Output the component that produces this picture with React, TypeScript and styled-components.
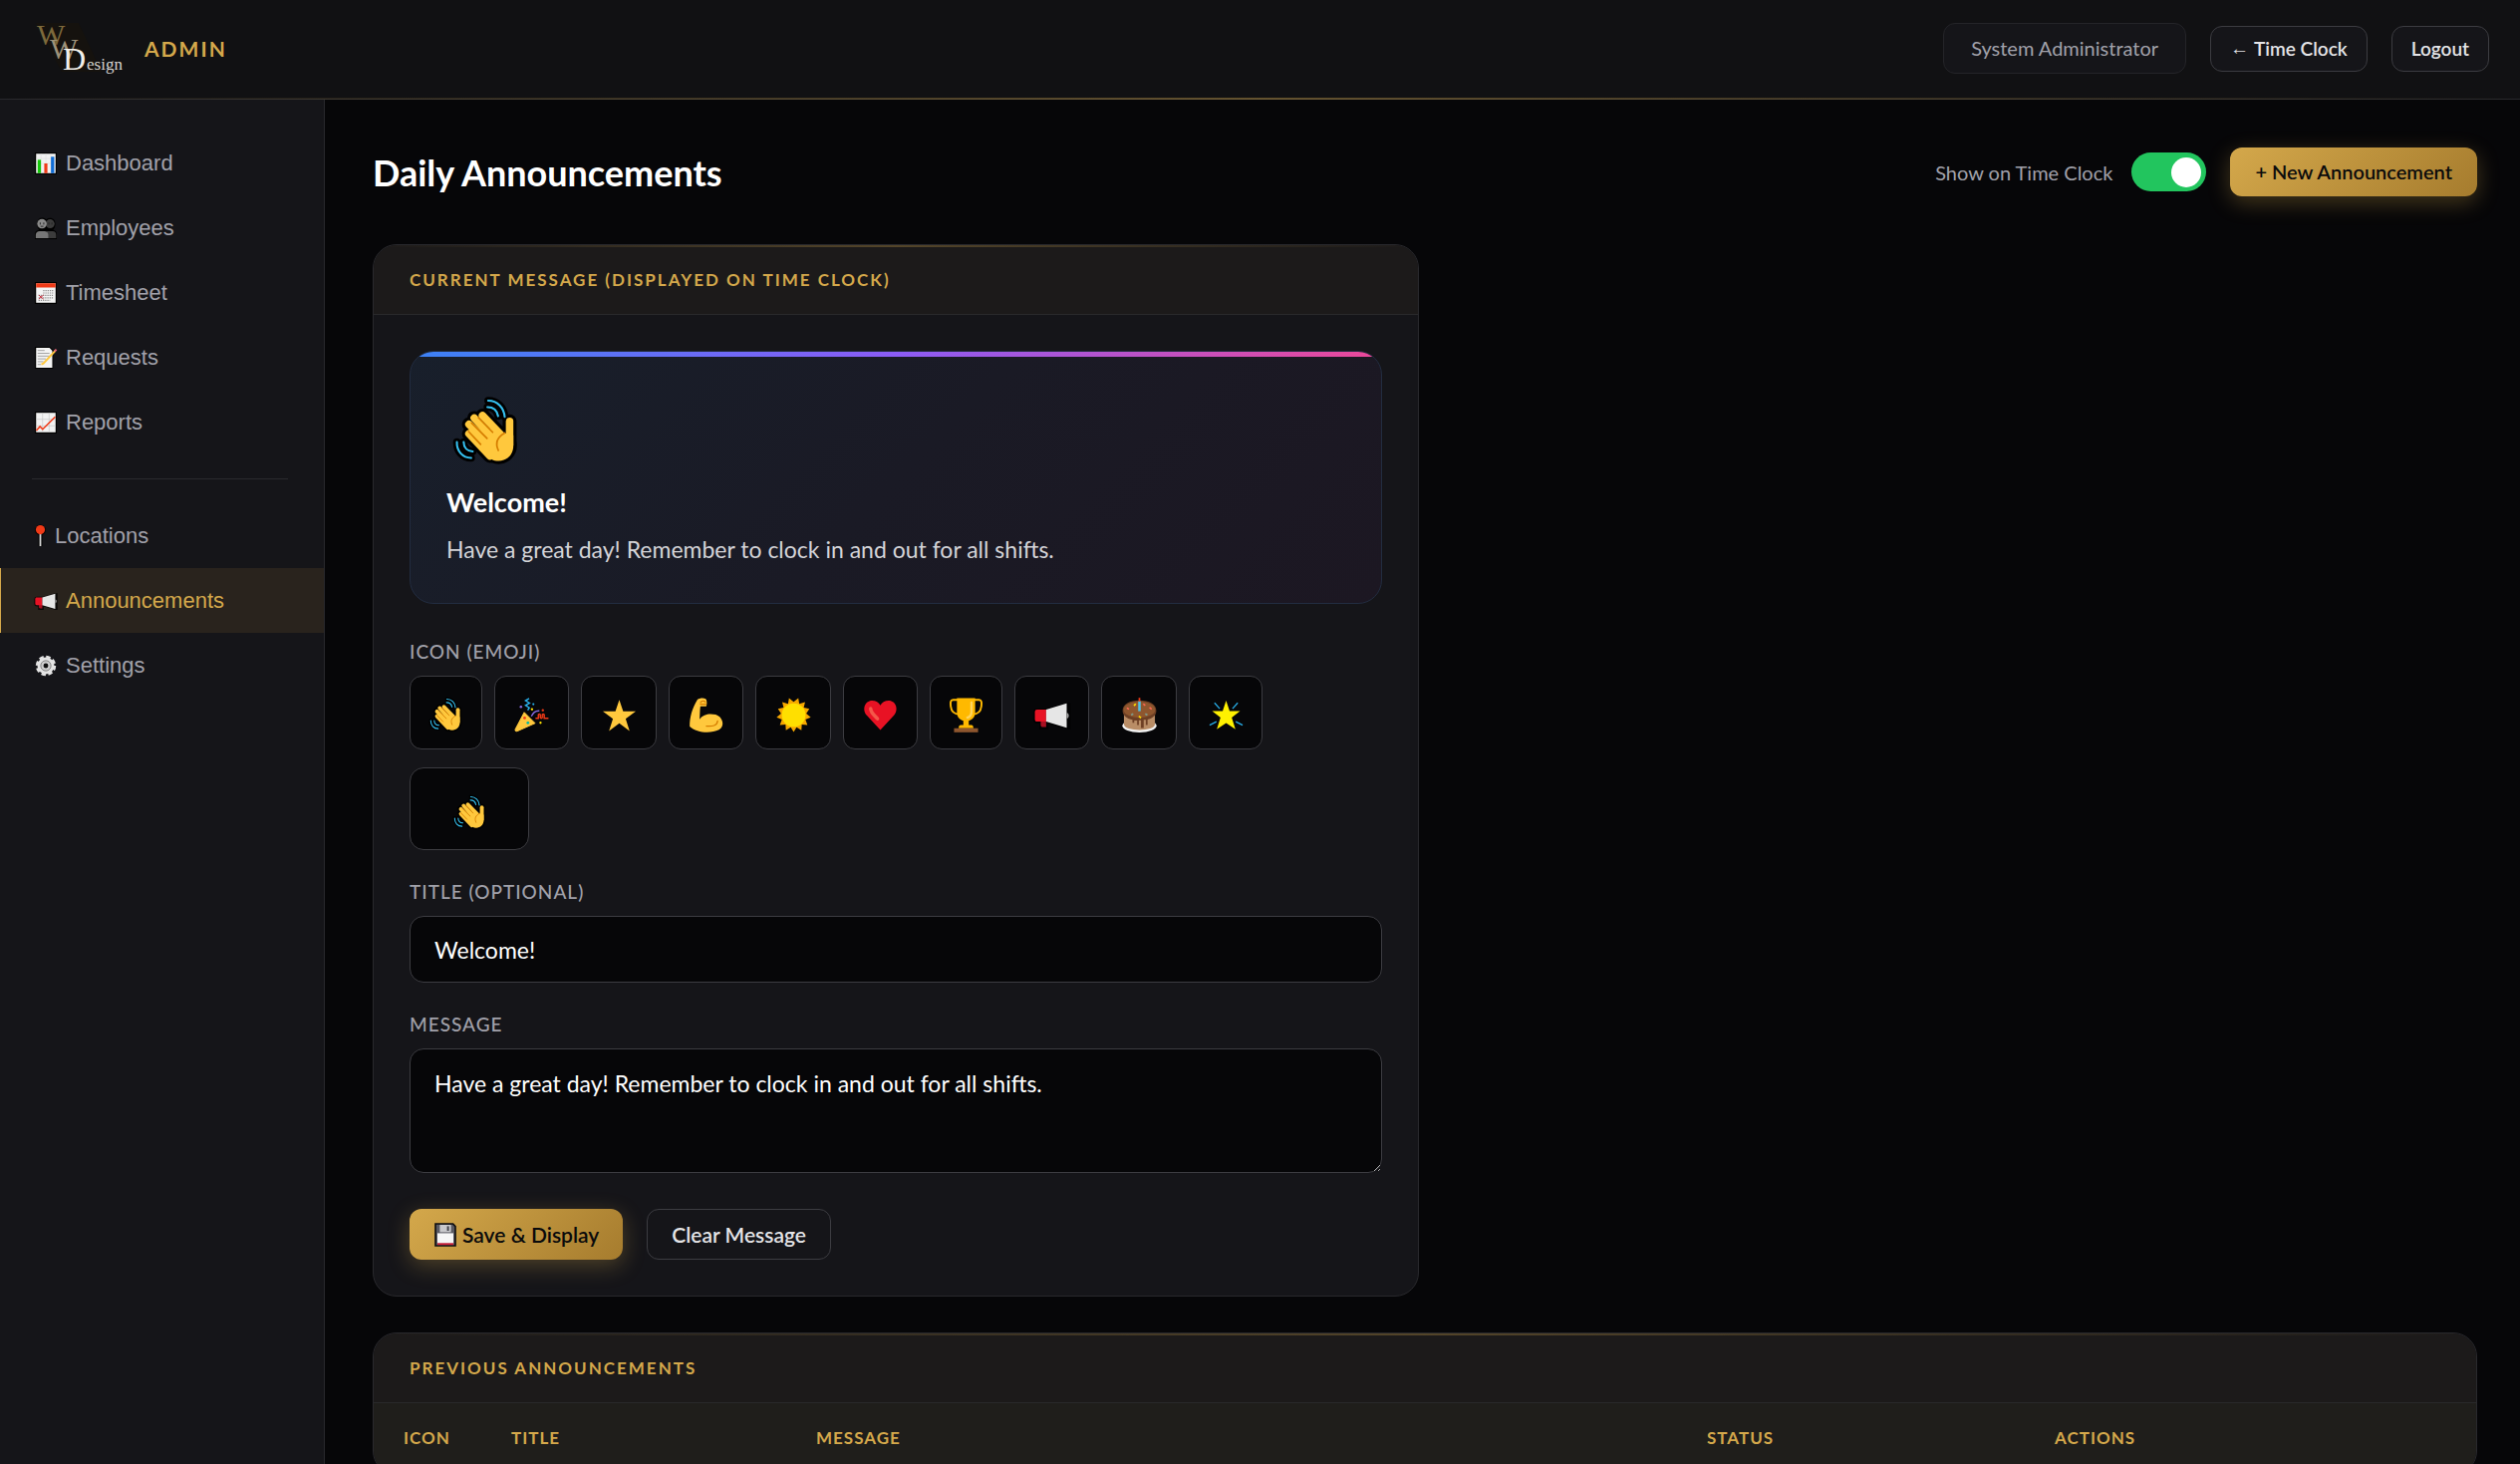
import React, { useState } from "react";
import styled, { createGlobalStyle, css } from "styled-components";

const sans = `Lato, "Noto Sans", sans-serif`;

const GlobalStyle = createGlobalStyle`
  *, *::before, *::after { box-sizing: border-box; }
  body {
    margin: 0;
    background: #060608;
    color: #ffffff;
    font-family: ${sans};
  }
  button, input, textarea { font-family: inherit; }
`;

/* ---------- page frame ---------- */

const Page = styled.div`
  display: flex;
  flex-direction: column;
  height: 100vh;
`;

const TopBar = styled.header`
  position: relative;
  display: flex;
  align-items: center;
  justify-content: space-between;
  flex: none;
  height: 100px;
  padding: 0 31px 2px 36px;
  background: #111113;
  border-bottom: 1px solid #29292d;
  &::after {
    content: "";
    position: absolute;
    left: 0;
    right: 0;
    bottom: -1px;
    height: 2px;
    background: linear-gradient(90deg, transparent, #d4a84b, transparent);
    opacity: 0.4;
  }
`;

const Brand = styled.div`
  display: flex;
  align-items: center;
  gap: 21px;
`;

const BrandName = styled.span`
  font-size: 21px;
  font-weight: 700;
  letter-spacing: 2px;
  color: #d4a84b;
`;

const TopActions = styled.div`
  display: flex;
  align-items: center;
  gap: 24px;
`;

const UserBadge = styled.span`
  padding: 12px 27px;
  border: 1px solid #242428;
  border-radius: 12px;
  background: #151519;
  color: #a1a1aa;
  font-size: 20px;
  line-height: 25px;
`;

const Body = styled.div`
  display: flex;
  flex: 1;
  min-height: 0;
`;

const Sidebar = styled.nav`
  flex: none;
  width: 326px;
  padding: 31px 0;
  background: #151519;
  border-right: 1px solid #29292d;
`;

const NavLink = styled.a<{ $active?: boolean }>`
  display: flex;
  align-items: center;
  gap: 9px;
  height: 65px;
  padding-left: ${(p) => (p.$active ? 34 : 35)}px;
  font-family: "Liberation Sans", Arial, sans-serif;
  font-size: 22px;
  color: #a1a1aa;
  text-decoration: none;
  ${(p) =>
    p.$active &&
    css`
      color: #d4a84b;
      background: #29231d;
      border-left: 1px solid #d4a84b;
    `}
`;

const NavRule = styled.hr`
  height: 1px;
  margin: 24px 36px 24px 32px;
  border: 0;
  background: #2a2a2e;
`;

const Main = styled.main`
  display: flex;
  flex: 1;
  flex-direction: column;
  gap: 36px;
  min-width: 0;
  padding: 48px 43px 48px 48px;
  overflow: auto;
  scrollbar-width: none;
`;

const PageHead = styled.div`
  display: flex;
  align-items: center;
  justify-content: space-between;
  margin-bottom: 12px;
`;

const PageTitle = styled.h1`
  margin: 0;
  font-size: 36px;
  line-height: 48px;
  font-weight: 700;
`;

const HeadActions = styled.div`
  display: flex;
  align-items: center;
  gap: 24px;
`;

/* ---------- controls ---------- */

const SwitchLabel = styled.label`
  display: flex;
  align-items: center;
  gap: 19px;
  font-size: 20px;
  color: #a1a1aa;
`;

const Switch = styled.input`
  appearance: none;
  display: flex;
  align-items: center;
  width: 75px;
  height: 39px;
  margin: 0;
  padding: 0 5px;
  border-radius: 20px;
  background: #3f3f46;
  cursor: pointer;
  &::before {
    content: "";
    width: 30px;
    height: 30px;
    border-radius: 50%;
    background: #ffffff;
  }
  &:checked {
    justify-content: flex-end;
    background: #22c55e;
  }
`;

const buttonSizes = {
  small: css`
    padding: 10px 19px;
    font-size: 19px;
    line-height: 24px;
  `,
  medium: css`
    padding: 12px 25px;
    font-size: 20px;
    line-height: 25px;
  `,
  large: css`
    padding: 12px 24px;
    font-size: 21px;
    line-height: 25px;
  `,
};

const Button = styled.button<{ $gold?: boolean; $size: keyof typeof buttonSizes }>`
  display: inline-flex;
  align-items: center;
  justify-content: center;
  gap: 5px;
  border: 1px solid #3c3c41;
  border-radius: 12px;
  background: #151519;
  color: #e4e4e7;
  font-weight: 600;
  white-space: nowrap;
  cursor: pointer;
  ${(p) => buttonSizes[p.$size]}
  ${(p) =>
    p.$gold &&
    css`
      border-width: 0;
      background: linear-gradient(135deg, #d4a84b, #a67c2e);
      box-shadow: 0 6px 22px rgba(212, 168, 75, 0.3);
      color: #0a0a0b;
    `}
`;

const Arrow = styled.span`
  font-family: "Liberation Serif", serif;
  font-weight: 400;
`;

/* ---------- cards ---------- */

const Card = styled.section<{ $narrow?: boolean }>`
  position: relative;
  flex: none;
  width: 100%;
  max-width: ${(p) => (p.$narrow ? "1050px" : "none")};
  border: 1px solid #29292d;
  border-radius: 24px;
  background: #151519;
  overflow: hidden;
  &::before {
    content: "";
    position: absolute;
    top: -1px;
    left: 0;
    right: 0;
    height: 3px;
    background: linear-gradient(90deg, transparent, #d4a84b, transparent);
    opacity: 0.3;
  }
`;

const CardTitle = styled.h2`
  margin: 0;
  padding: 24px 36px;
  border-bottom: 1px solid #29292b;
  background: #1c1a1a;
  color: #d4a84b;
  font-size: 17px;
  line-height: 21px;
  font-weight: 700;
  letter-spacing: 2px;
  text-transform: uppercase;
`;

const CardBody = styled.form`
  display: flex;
  flex-direction: column;
  padding: 36px;
`;

const Preview = styled.div`
  position: relative;
  margin-bottom: 36px;
  padding: 36px;
  border: 1px solid #222c40;
  border-radius: 24px;
  background: linear-gradient(135deg, #181f2b, #1a1a25 50%, #1c1722);
  overflow: hidden;
  &::before {
    content: "";
    position: absolute;
    top: -1px;
    left: -1px;
    right: -1px;
    height: 6px;
    background: linear-gradient(90deg, #3b82f6, #8b5cf6, #ec4899);
  }
`;

const PreviewIcon = styled.div`
  display: flex;
  align-items: center;
  height: 86px;
  margin-bottom: 12px;
  padding: 2px 0 0 6px;
`;

const PreviewTitle = styled.h3`
  margin: 0 0 12px;
  font-size: 27px;
  line-height: 34px;
  font-weight: 700;
`;

const PreviewText = styled.p`
  margin: 0;
  font-size: 23px;
  line-height: 36px;
  color: #d4d4d8;
`;

const FieldLabel = styled.label`
  margin-bottom: 12px;
  font-size: 19px;
  line-height: 24px;
  font-weight: 500;
  letter-spacing: 1px;
  color: #a1a1aa;
  text-transform: uppercase;
`;

const EmojiRow = styled.div`
  display: flex;
  flex-wrap: wrap;
  gap: 12px;
  margin-bottom: 18px;
`;

const EmojiButton = styled.button<{ $w: number }>`
  display: flex;
  align-items: center;
  justify-content: center;
  width: ${(p) => p.$w}px;
  height: 74px;
  padding: 4px 0 0;
  border: 1px solid #3c3c41;
  border-radius: 12px;
  background: #060608;
  cursor: pointer;
`;

const fieldBox = css`
  border: 1px solid #3c3c41;
  border-radius: 14px;
  background: #060608;
  color: #ffffff;
  font-size: 23px;
  outline: none;
  color-scheme: dark;
`;

const EmojiField = styled.div`
  position: relative;
  display: flex;
  width: 120px;
  margin-bottom: 30px;
`;

const EmojiInput = styled.input`
  ${fieldBox}
  width: 100%;
  height: 83px;
  text-align: center;
`;

const EmojiValue = styled.span`
  position: absolute;
  inset: 8px 0 0;
  display: flex;
  align-items: center;
  justify-content: center;
  pointer-events: none;
`;

const TextField = styled.input`
  ${fieldBox}
  height: 67px;
  margin-bottom: 30px;
  padding: 0 24px;
`;

const TextArea = styled.textarea`
  ${fieldBox}
  height: 125px;
  margin-bottom: 36px;
  padding: 18px 24px;
  line-height: 32px;
  resize: vertical;
`;

const FormActions = styled.div`
  display: flex;
  gap: 24px;
`;

const Table = styled.table`
  width: 100%;
  border-collapse: collapse;
  table-layout: fixed;
`;

const HeadCell = styled.th<{ $w: string }>`
  width: ${(p) => p.$w};
  padding: 24px 0 24px 30px;
  border-bottom: 1px solid #29292b;
  background: #1f1e1b;
  color: #d4a84b;
  font-size: 17px;
  line-height: 22px;
  font-weight: 700;
  letter-spacing: 1px;
  text-align: left;
  text-transform: uppercase;
`;

/* ---------- emoji drawings, all on a 36 x 36 grid ---------- */

const waveHand = (
  <>
    <path d="M16 9.5 27 21M11.6 10.8 24 24M8.8 14.2 22 27M8.8 19.2 20 31" strokeWidth="4" />
    <path d="M30.4 12.6V25" strokeWidth="4" />
    <path d="M13 21 23 14.5 27 18.6 32.4 20V25.5C32.4 30.5 28.8 33.6 24.6 33.6 21.6 33.6 20 32.6 18.4 30.4Z" strokeWidth="0" />
  </>
);
const waveArcs = "M19 1.6C24 1.6 27.4 5.4 27.8 10.2M18.6 5C21.8 5 23.8 7 24.3 9.8M2.4 23.6C2.2 28.4 5.4 32 10 32M6 23.6C6 26.6 8 28.4 10.8 28.6";

const glyphs: Record<string, React.ReactNode> = {
  wave: (
    <>
      <g fill="#000" stroke="#000" strokeLinecap="round" strokeLinejoin="round">
        <path d={waveArcs} fill="none" strokeWidth="4" />
        <path d="M16 9.5 27 21M11.6 10.8 24 24M8.8 14.2 22 27M8.8 19.2 20 31M30.4 12.6V25" strokeWidth="7.4" />
        <circle cx="24.6" cy="25.6" r="8" strokeWidth="3.4" />
      </g>
      <g fill="#ffc83d" stroke="#ffc83d" strokeLinecap="round">{waveHand}</g>
      <g fill="none" strokeLinecap="round">
        <path d={waveArcs} stroke="#35c1f1" strokeWidth="1.1" />
        <path d="M13.8 10.6 21.4 18.4M10.2 13.4 18.4 21.6M8.6 18 15 24.8M27.8 18.8C23.8 21 22.6 24 24.4 28" stroke="#d67d00" strokeWidth="0.9" />
      </g>
    </>
  ),
  party: (
    <>
      <path d="M10.4 15.2 21.6 26.4 3.2 34.6C1.6 35.2.6 34.2 1.2 32.6Z" fill="#ffc83d" stroke="#ffc83d" strokeLinejoin="round" />
      <path d="M15.4 1 11.8 3.2 15.8 5.6 11.8 8 15.6 10.4 14 13" fill="none" stroke="#28afea" strokeWidth="1.5" />
      <path d="M17.8 19.4C19.4 15.4 22.4 13.4 26 13.6" fill="none" stroke="#886ce4" strokeWidth="1.4" />
      <path d="M22 21.4H25V17.8C25 16.6 27 16.6 27 17.8V20.2C27 21.6 29 21.6 29 20.2V17.8C29 16.6 31 16.6 31 17.8V21.4H35.4" fill="none" stroke="#f03a17" strokeWidth="1.5" />
      <circle cx="10.8" cy="21" r="1.4" fill="#f03a17" />
      <circle cx="14.2" cy="26" r="1.4" fill="#00b7a8" />
      <circle cx="7" cy="9.4" r="1.3" fill="#886ce4" />
      <circle cx="19.8" cy="6.8" r="1.1" fill="#28afea" />
      <circle cx="18.4" cy="12" r="1.2" fill="#ffe100" />
      <circle cx="29.6" cy="13" r="1.2" fill="#f03a17" />
      <circle cx="27.2" cy="26" r="1.2" fill="#ffe100" />
    </>
  ),
  star: <path d="M18 2.4 22 14.2H35L24.6 21.8 28.6 34.4 18 26.6 7.4 34.4 11.4 21.8 1 14.2H14Z" fill="#ffc83d" />,
  muscle: (
    <>
      <path d="M9 2.2C11.4.4 15.4.2 17.6 1.2 19.2 2 19.2 7.6 18.2 9H12.2C11.6 14 11.8 18.6 11.4 22.4 15.4 16.4 22.6 16.2 28 17.6 35.6 19.8 38 30 31.4 33.2 23 37.4 8 36.4 1.2 29.8 1 20 3.8 11 9 2.2Z" fill="#ffc83d" />
      <path d="M18.4 29.4C24.6 30 29.6 29 30 24M12.4 5C13.6 2.8 16.6 3 17.4 4.6M12.2 6.8H18" fill="none" stroke="#d67d00" strokeWidth="1.3" strokeLinecap="round" />
    </>
  ),
  sun: (
    <>
      <path d="M18 4.4 22.8.6 23.8 6.4 29.8 4.6 28.4 10.4 34.2 11.6 31 16.4 35.6 20.2 30.2 22.6 32.2 28.2 26.4 27.8 26 33.8 21 30.6 18 35.6 15 30.6 10 33.8 9.6 27.8 3.8 28.2 5.8 22.6.4 20.2 5 16.4 1.8 11.6 7.6 10.4 6.2 4.6 12.2 6.4 13.2.6Z" fill="#f7a800" />
      <circle cx="18" cy="18" r="12.2" fill="#ffdf00" />
    </>
  ),
  heart: (
    <>
      <path d="M18 33.4 4.2 18.6C-1.4 12.4 2 3 9.4 3 13.4 3 16.4 4.8 18 8 19.6 4.8 22.6 3 26.6 3 34 3 37.4 12.4 31.8 18.6Z" fill="#e81224" />
      <path d="M8 11.4C8.2 15.8 12 18.4 15 21.8" stroke="#f4584a" strokeWidth="3.6" strokeLinecap="round" fill="none" />
    </>
  ),
  trophy: (
    <>
      <path d="M9.6 2.4H4.6C1.6 2.4 1.8 5.4 2.2 9 2.8 14.4 6.6 17.2 11.4 17.2M26.4 2.4H31.4C34.4 2.4 34.2 5.4 33.8 9 33.2 14.4 29.4 17.2 24.6 17.2" fill="none" stroke="#ffb900" strokeWidth="2" />
      <path d="M8.6.6H27.4V15C27.4 20 24.8 23 20.8 23.8V28.4H23.6C24.8 28.4 25.6 29.6 25.6 31.6H10.4C10.4 29.6 11.2 28.4 12.4 28.4H15.2V23.8C11.2 23 8.6 20 8.6 15Z" fill="#ffb900" />
      <path d="M23.6 5V14.6C23.6 18 22.4 19.6 19.4 20.6" fill="none" stroke="#ffd45c" strokeWidth="2.4" strokeLinecap="round" />
      <path d="M5.6 31.6H30.4V35.8H5.6Z" fill="#8e562e" />
    </>
  ),
  megaphone: (
    <>
      <path d="M0 15C0 13 1 12.4 3 12.4H13L34 6.6H36V31.4H34L13.4 25.6V31.6H6.4V25.6H3C1 25.6 0 25 0 23Z" fill="#000" opacity=".7" stroke="#000" strokeWidth="2.4" />
      <path d="M6.6 24H12.2V30.4H9C7.4 30.4 6.6 29.6 6.6 28Z" fill="#a80f22" />
      <path d="M12.2 12.4H3C1.4 12.4.6 13.2.6 15V22C.6 24 1.4 24.8 3 24.8H12.2Z" fill="#e81224" />
      <path d="M12.2 12.4 33.4 6V31L12.2 24.8Z" fill="#e6e6e6" />
      <path d="M33.4 15.6C36.4 15.6 36.4 21.4 33.4 21.4Z" fill="#9b9b9b" />
    </>
  ),
  cake: (
    <>
      <ellipse cx="18" cy="29" rx="17.6" ry="7" fill="#f2f2f2" />
      <path d="M2 14H34V27.6C34 35.2 2 35.2 2 27.6Z" fill="#b98d66" />
      <path d="M.6 13.6C.6 6.6 8 2.8 18 2.8S35.4 6.6 35.4 13.6C35.4 18.6 31 21.6 26.4 22.6V28.4H24.6V23H22.4V31.4H19.6V23.4H17.4V28.4H15.6V23.6H12.6V26H10.8V22.8C5.6 22 .6 18.6.6 13.6Z" fill="#6d3f24" />
      <ellipse cx="18" cy="12.4" rx="16.4" ry="8.4" fill="#8e562e" />
      <path d="M18 3.6V14" stroke="#4fc3e8" strokeWidth="2.6" />
      <path d="M18 .2V4" stroke="#f03a17" strokeWidth="1.8" />
      <path d="M12.4 8.4 14.2 6.4M17.4 19.2 19.6 21" stroke="#ffe100" strokeWidth="1.8" />
      <path d="M5 10.6 7.2 12M28.4 10.2 30.6 12M22 6.6 24 8" stroke="#ff6a56" strokeWidth="1.6" />
      <path d="M9.4 18 11.6 16.6M24 16.6 26.2 18" stroke="#7f9a8a" strokeWidth="1.8" />
    </>
  ),
  glow: (
    <>
      <path d="M18 3 21.6 13.8H32.4L23.8 20.6 27.6 32.6 18 26.2 8.4 32.6 12.2 20.6 3.6 13.8H14.4Z" fill="#fff100" />
      <path d="M6 5.4 11.4 11.4M30 5.4 24.6 11.4M1 28.4 8 24.8M35 28.4 28 24.8" stroke="#28afea" strokeWidth="1.3" />
    </>
  ),
  barChart: (
    <>
      <path d="M0 0H36V36H0Z" fill="#000" />
      <path d="M2 2H34V34H2Z" fill="#f2f2f2" />
      <path d="M10 2V34M18 2V34M26 2V34M2 10H34M2 18H34" stroke="#dcdcdc" />
      <path d="M4.6 12H10V34H4.6Z" fill="#16c60c" />
      <path d="M15.4 18H20.6V34H15.4Z" fill="#f03a17" />
      <path d="M26.4 7H31.8V34H26.4Z" fill="#0f6cd6" />
    </>
  ),
  lineChart: (
    <>
      <path d="M0 0H36V36H0Z" fill="#000" />
      <path d="M2 2H34V34H2Z" fill="#f2f2f2" />
      <path d="M12.6 2V34M23.4 2V34M2 12.6H34M2 23.4H34" stroke="#c4c4c4" />
      <path d="M2.4 31 8.4 24.4 12.8 29 33.4 8.6" fill="none" stroke="#f03a17" strokeWidth="2.6" />
    </>
  ),
  people: (
    <>
      <path d="M0 36V28C0 24 3 21.4 7 21C1.4 14 3 1 12 1 15 1 17 2 18.4 3.6 26-1.6 34.6 3 33.6 12.4 33.4 16 32 19 30 21 34 21.6 36 24.4 36 28V36Z" fill="#000" />
      <circle cx="25" cy="10.8" r="7.4" fill="#3c3c3c" />
      <path d="M19 34.4V23H29C33 23 35 25.4 35 29V34.4Z" fill="#3c3c3c" />
      <circle cx="11.6" cy="10.8" r="7.8" fill="#8a8a8a" />
      <path d="M1.4 34.4V29C1.4 25.4 4 23 8 23H15.6C19.4 23 22 25.4 22 29V34.4Z" fill="#767676" />
      <path d="M8.8 8.6V12M14.6 8.6V12M23 8.6V12M28 8.6V12M9.4 15H14" stroke="#222" strokeWidth="1.5" />
    </>
  ),
  calendar: (
    <>
      <path d="M0 0H36V36H0Z" fill="#000" />
      <path d="M2 2H34V34H2Z" fill="#f4f4f4" />
      <path d="M2 2H34V9H2Z" fill="#f03a17" />
      <path d="M13.6 14H31M13.6 18H31M6 22H31M6 26H31M6 30H25" stroke="#8c8c8c" strokeWidth="2" strokeDasharray="2 1.6" />
      <path d="M6.4 21.4 14 28M14 21.4 6.4 28" stroke="#c52a3a" strokeWidth="1.6" />
    </>
  ),
  memo: (
    <>
      <path d="M0 0H25L30 5.4V36H0Z" fill="#000" />
      <path d="M2 1.6H24L28.6 6.4V34.4H2Z" fill="#f4f4f4" />
      <path d="M4.6 6H16M4.6 10.6H24M4.6 15.2H24M4.6 19.8H18M4.6 24.4H14M4.6 29H10" stroke="#979797" strokeWidth="1.4" />
      <path d="M33.6 6.4 14 27.4 10.6 28.8" fill="none" stroke="#ffc83d" strokeWidth="3.4" />
      <path d="M35.2 4.4 32.4 7.6" stroke="#e8677a" strokeWidth="3.4" />
    </>
  ),
  gear: (
    <>
      <circle cx="18" cy="18" r="14.4" fill="none" stroke="#e4e4e4" strokeWidth="4.6" strokeDasharray="7.2 4.11" />
      <circle cx="18" cy="18" r="11.4" fill="#e4e4e4" stroke="#e4e4e4" strokeWidth="5" />
      <circle cx="18" cy="18" r="8.4" fill="#cfcfcf" stroke="#777" strokeWidth="1.4" />
      <circle cx="18" cy="18" r="4" fill="#111" />
    </>
  ),
};

const Emoji = ({ name, size }: { name: string; size: number }) => (
  <svg width={size} height={size} viewBox="0 0 36 36" aria-hidden="true" overflow="visible">
    {glyphs[name]}
  </svg>
);

const PinIcon = () => (
  <svg width="11" height="24" viewBox="0 0 11 24" aria-hidden="true">
    <path d="M5.5 7V22" stroke="#000" strokeWidth="4" />
    <circle cx="5.5" cy="5.8" r="5.4" fill="#000" />
    <path d="M5.5 8V22" stroke="#d8d8d8" strokeWidth="1.8" />
    <circle cx="5.5" cy="5.6" r="4.6" fill="#f03a17" />
  </svg>
);

const DiskIcon = () => (
  <svg width="24" height="24" viewBox="0 0 24 24" aria-hidden="true">
    <path d="M2 1H19.6L22 3.6V23H2Z" fill="#5a5a62" stroke="#0c0c10" strokeWidth="1.6" />
    <path d="M6.4 2H17.6V9.4H6.4Z" fill="#c9c9cc" />
    <path d="M13.6 3.4H15.6V8H13.6Z" fill="#45454c" />
    <path d="M4 10.4H20V20.6H4Z" fill="#f6f6f6" />
    <path d="M4 20.4H20V22.2H4Z" fill="#d61f3a" />
  </svg>
);

const Logo = () => (
  <svg width="88" height="68" viewBox="0 -8 88 68" role="img" aria-label="WW Design">
    <path d="M0 0H43L66 49H26Z" fill="#15120e" />
    <g fontFamily='"Liberation Serif", serif'>
      <text x="1" y="22" fontSize="30" fill="#7d6a3c">W</text>
      <text x="14" y="36" fontSize="30" fill="#9d9179">W</text>
      <text x="27" y="47" fontSize="32" fill="#f2f0ea">D</text>
      <text x="51" y="47" fontSize="17" fill="#d6d4d0">esign</text>
    </g>
  </svg>
);

/* ---------- data ---------- */

const primaryNav = [
  ["barChart", "Dashboard"],
  ["people", "Employees"],
  ["calendar", "Timesheet"],
  ["memo", "Requests"],
  ["lineChart", "Reports"],
];

const choices: [string, string, number][] = [
  ["wave", "Wave", 73],
  ["party", "Party", 75],
  ["star", "Star", 76],
  ["muscle", "Strength", 75],
  ["sun", "Sun", 76],
  ["heart", "Heart", 75],
  ["trophy", "Trophy", 73],
  ["megaphone", "Megaphone", 75],
  ["cake", "Cake", 76],
  ["glow", "Glowing star", 74],
];

const columns = [
  ["Icon", "108px"],
  ["Title", "306px"],
  ["Message", "894px"],
  ["Status", "349px"],
  ["Actions", "auto"],
];

export default function App() {
  const [icon, setIcon] = useState("wave");
  const [title, setTitle] = useState("Welcome!");
  const [message, setMessage] = useState(
    "Have a great day! Remember to clock in and out for all shifts."
  );

  return (
    <Page>
      <GlobalStyle />
      <TopBar>
        <Brand>
          <Logo />
          <BrandName>ADMIN</BrandName>
        </Brand>
        <TopActions>
          <UserBadge>System Administrator</UserBadge>
          <Button $size="small" type="button">
            <Arrow>←</Arrow>Time Clock
          </Button>
          <Button $size="small" type="button">Logout</Button>
        </TopActions>
      </TopBar>
      <Body>
        <Sidebar>
          {primaryNav.map(([glyph, label]) => (
            <NavLink key={label} href="#">
              <Emoji name={glyph} size={22} />
              {label}
            </NavLink>
          ))}
          <NavRule />
          <NavLink href="#">
            <PinIcon />
            Locations
          </NavLink>
          <NavLink href="#" $active aria-current="page">
            <Emoji name="megaphone" size={22} />
            Announcements
          </NavLink>
          <NavLink href="#">
            <Emoji name="gear" size={22} />
            Settings
          </NavLink>
        </Sidebar>
        <Main>
          <PageHead>
            <PageTitle>Daily Announcements</PageTitle>
            <HeadActions>
              <SwitchLabel>
                Show on Time Clock
                <Switch type="checkbox" defaultChecked />
              </SwitchLabel>
              <Button $gold $size="medium" type="button">+ New Announcement</Button>
            </HeadActions>
          </PageHead>

          <Card $narrow>
            <CardTitle>Current Message (Displayed on Time Clock)</CardTitle>
            <CardBody onSubmit={(e) => e.preventDefault()}>
              <Preview>
                <PreviewIcon>
                  <Emoji name={icon} size={68} />
                </PreviewIcon>
                <PreviewTitle>{title}</PreviewTitle>
                <PreviewText>{message}</PreviewText>
              </Preview>

              <FieldLabel htmlFor="icon">Icon (Emoji)</FieldLabel>
              <EmojiRow>
                {choices.map(([name, label, w]) => (
                  <EmojiButton key={name} $w={w} type="button" aria-label={label} onClick={() => setIcon(name)}>
                    <Emoji name={name} size={35} />
                  </EmojiButton>
                ))}
              </EmojiRow>
              <EmojiField>
                <EmojiInput id="icon" type="text" maxLength={2} />
                <EmojiValue>
                  <Emoji name={icon} size={35} />
                </EmojiValue>
              </EmojiField>

              <FieldLabel htmlFor="title">Title (Optional)</FieldLabel>
              <TextField id="title" type="text" value={title} onChange={(e) => setTitle(e.target.value)} />

              <FieldLabel htmlFor="message">Message</FieldLabel>
              <TextArea id="message" value={message} onChange={(e) => setMessage(e.target.value)} />

              <FormActions>
                <Button $gold $size="large" type="submit">
                  <DiskIcon />
                  Save &amp; Display
                </Button>
                <Button $size="large" type="button">Clear Message</Button>
              </FormActions>
            </CardBody>
          </Card>

          <Card>
            <CardTitle>Previous Announcements</CardTitle>
            <Table>
              <thead>
                <tr>
                  {columns.map(([name, w]) => (
                    <HeadCell key={name} scope="col" $w={w}>{name}</HeadCell>
                  ))}
                </tr>
              </thead>
            </Table>
          </Card>
        </Main>
      </Body>
    </Page>
  );
}
